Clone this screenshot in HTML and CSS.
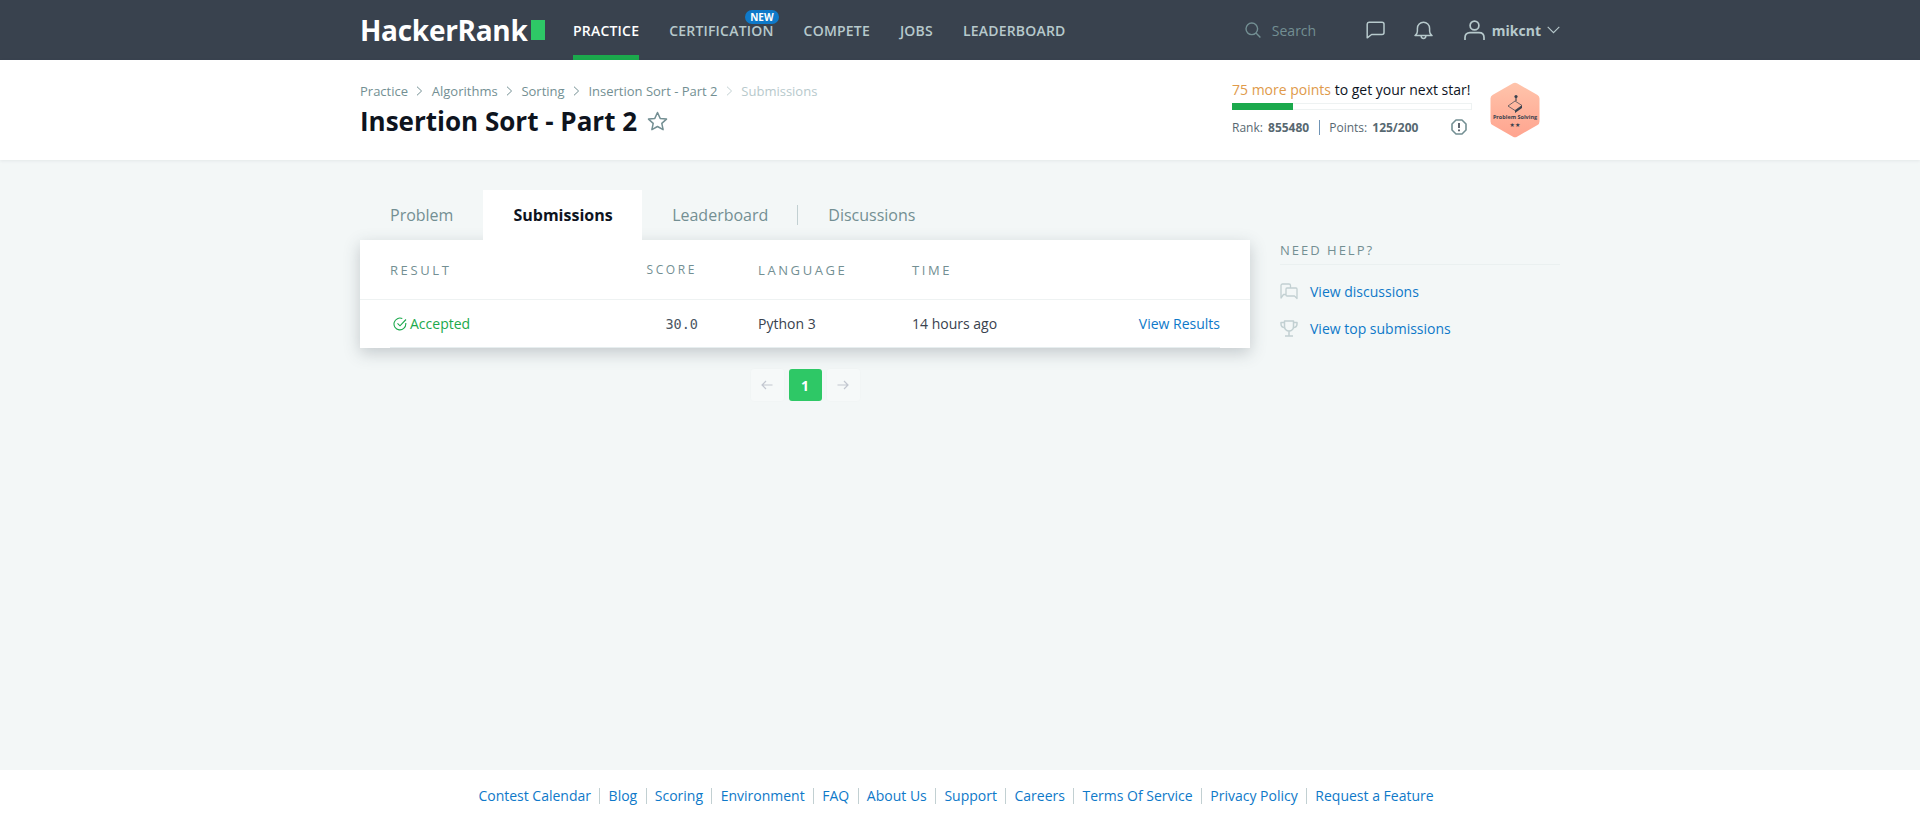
FILE: index.html

```html
<!DOCTYPE html>
<html lang="en">
<head>
  <meta charset="UTF-8" />
  <title>Insertion Sort - Part 2 | HackerRank</title>
  <link rel="stylesheet" href="styles.css">
</head>
<body>

<header class="topbar">
  <div class="wrap topbar-in">
    <a class="logo"><span>HackerRank</span><i class="logo-block"></i></a>
    <nav class="nav">
      <a class="nav-item active">PRACTICE</a>
      <a class="nav-item has-badge">CERTIFICATION<span class="badge-new">NEW</span></a>
      <a class="nav-item">COMPETE</a>
      <a class="nav-item">JOBS</a>
      <a class="nav-item">LEADERBOARD</a>
    </nav>
    <div class="search">
      <svg width="16" height="16" viewBox="0 0 16 16" fill="none" stroke="#738f93" stroke-width="1.4"><circle cx="6.8" cy="6.8" r="5.8"/><path d="M11 11l4.4 4.4"/></svg>
      <span>Search</span>
    </div>
    <svg class="top-icon chat-icon" width="19" height="18" viewBox="0 0 19 18" fill="none" stroke="#b7c9cc" stroke-width="1.5" stroke-linejoin="round"><path d="M3 1.2h13a2 2 0 0 1 2 2v8.3a2 2 0 0 1-2 2H5.6L1.2 16.8V3a2 2 0 0 1 1.8-1.8z"/></svg>
    <svg class="top-icon bell-icon" width="19" height="19" viewBox="0 0 19 19" fill="none" stroke="#b7c9cc" stroke-width="1.5" stroke-linejoin="round"><path d="M1 14.6c1.6-1 2.4-2.4 2.4-4.4V7.4a6.1 6.1 0 0 1 12.2 0v2.8c0 2 .8 3.4 2.4 4.4z"/><path d="M7.2 15c0 3.2 4.6 3.2 4.6 0"/></svg>
    <div class="user">
      <svg width="21" height="20" viewBox="0 0 21 20" fill="none" stroke="#b7c9cc" stroke-width="1.7"><circle cx="10.5" cy="5.5" r="4.4"/><path d="M1 20v-2.5c0-3 2-4.8 5-4.8h9c3 0 5 1.8 5 4.8V20"/></svg>
      <span>mikcnt</span>
      <svg width="13" height="8" viewBox="0 0 13 8" fill="none" stroke="#b7c9cc" stroke-width="1.1"><path d="M.7.8l5.8 5.8L12.3.8"/></svg>
    </div>
  </div>
</header>

<section class="subhead">
  <div class="wrap subhead-in">
    <div class="page-title">
      <div class="crumbs">
        <a>Practice</a><svg class="sep" width="7" height="10" viewBox="0 0 7 10"><path d="M1 .7L5.6 5 1 9.3"/></svg>
        <a>Algorithms</a><svg class="sep" width="7" height="10" viewBox="0 0 7 10"><path d="M1 .7L5.6 5 1 9.3"/></svg>
        <a>Sorting</a><svg class="sep" width="7" height="10" viewBox="0 0 7 10"><path d="M1 .7L5.6 5 1 9.3"/></svg>
        <a>Insertion Sort - Part 2</a><svg class="sep light" width="7" height="10" viewBox="0 0 7 10"><path d="M1 .7L5.6 5 1 9.3"/></svg>
        <a class="current">Submissions</a>
      </div>
      <h1>Insertion Sort - Part 2
        <svg class="star" width="21" height="20" viewBox="0 0 21 20" fill="none" stroke="#738f93" stroke-width="1.5" stroke-linejoin="round"><path d="M10.5 1.5l2.7 5.9 6.3.7-4.7 4.3 1.3 6.3-5.6-3.2-5.6 3.2 1.3-6.3L1.5 8.1l6.3-.7z"/></svg>
      </h1>
    </div>
    <div class="progress">
      <p class="progress-txt"><span class="orange">75 more points</span> to get your next star!</p>
      <div class="bar"><div class="bar-fill"></div></div>
      <div class="stats">
        <span>Rank: <b>855480</b></span><i class="stats-sep"></i><span>Points: <b>125/200</b></span>
        <svg class="info" width="16" height="16" viewBox="0 0 16 16" fill="none"><path d="M5 1h6l4 4v6l-4 4H5l-4-4V5z" stroke="#738f93" stroke-width="1.6" stroke-linejoin="round"/><path d="M8 4v5M8 10.6v1.6" stroke="#39424e" stroke-width="1.6"/></svg>
      </div>
    </div>
    <svg class="hex" width="50" height="56" viewBox="0 0 50 56">
      <defs><linearGradient id="hexfill" x1="0" y1="0" x2="0" y2="1"><stop offset="0" stop-color="#ffc4ab"/><stop offset="1" stop-color="#ffa48f"/></linearGradient></defs>
      <path d="M25 .8a4 4 0 0 1 2 .5L47.500 13a4 4 0 0 1 2 3.500v23a4 4 0 0 1-2 3.500L27 54.700a4 4 0 0 1-4 0L2.500 43a4 4 0 0 1-2-3.500v-23a4 4 0 0 1 2-3.500L23 1.300a4 4 0 0 1 2-.5z" fill="url(#hexfill)"/>
      <path d="M18 24l7-5 7 4.500-7 5z" fill="none" stroke="#39424e" stroke-width=".7"/>
      <path d="M25 28.500l7-5v2.500l-7 5z" fill="#39424e"/>
      <path d="M26 19v-4" stroke="#39424e" stroke-width="1.100"/><circle cx="26" cy="14.500" r="1.600" fill="#39424e"/>
      <text class="hex-name" x="25" y="37" text-anchor="middle">Problem Solving</text>
      <text class="hex-stars" x="25" y="45" text-anchor="middle">★★</text>
    </svg>
  </div>
</section>

<main class="content">
  <div class="wrap columns">
    <div class="main-col">
      <div class="tabs">
        <a class="tab">Problem</a>
        <a class="tab active">Submissions</a>
        <a class="tab">Leaderboard</a>
        <i class="tab-sep"></i>
        <a class="tab">Discussions</a>
      </div>
      <div class="card">
        <div class="grid grid-head">
          <span>RESULT</span>
          <span class="score">SCORE</span>
          <span class="lang">LANGUAGE</span>
          <span>TIME</span>
          <span></span>
        </div>
        <div class="grid grid-row">
          <span class="accepted">
            <svg width="14" height="14" viewBox="0 0 14 14" fill="none" stroke="#1ba94c" stroke-width="1.100"><path d="M12.800 6.100V7A5.900 5.900 0 1 1 9.300 1.600"/><path d="M4.500 6.300L7 8.800l6-6.300"/></svg>
            Accepted
          </span>
          <span class="score mono">30.0</span>
          <span class="lang">Python 3</span>
          <span>14 hours ago</span>
          <a class="link">View Results</a>
        </div>
      </div>
      <div class="pager">
        <a class="page-btn"><svg width="12" height="10" viewBox="0 0 12 10" fill="none" stroke="#c2c7d0" stroke-width="1.200"><path d="M11.500 5H1M5 1L1 5l4 4"/></svg></a>
        <a class="page-btn current">1</a>
        <a class="page-btn"><svg width="12" height="10" viewBox="0 0 12 10" fill="none" stroke="#c2c7d0" stroke-width="1.200"><path d="M.5 5H11M7 1l4 4-4 4"/></svg></a>
      </div>
    </div>
    <aside class="side">
      <h4>NEED HELP?</h4>
      <a class="side-link">
        <svg width="18" height="17" viewBox="0 0 18 17" fill="none" stroke="#c2d0d2" stroke-width="1.300" stroke-linejoin="round"><path d="M6 11.500H3.500L1 15V2.500A1.500 1.500 0 0 1 2.500 1h6.500A1.500 1.500 0 0 1 10.500 2.500V5"/><path d="M7 5h9a1 1 0 0 1 1 1v9.500L14.500 13H7a1 1 0 0 1-1-1V6a1 1 0 0 1 1-1z"/></svg>
        View discussions
      </a>
      <a class="side-link">
        <svg width="18" height="17" viewBox="0 0 18 17" fill="none" stroke="#c2d0d2" stroke-width="1.500" stroke-linejoin="round"><path d="M4.500 1h9v5.500a4.500 4.500 0 0 1-9 0z"/><path d="M4.500 2.500H1V4c0 2 1.500 3.500 4 3.800M13.500 2.500H17V4c0 2-1.500 3.500-4 3.800M9 11v4.500M5 16h8"/></svg>
        View top submissions
      </a>
    </aside>
  </div>
</main>

<footer class="footer">
  <a>Contest Calendar</a><a>Blog</a><a>Scoring</a><a>Environment</a><a>FAQ</a><a>About Us</a><a>Support</a><a>Careers</a><a>Terms Of Service</a><a>Privacy Policy</a><a>Request a Feature</a>
</footer>

</body>
</html>
```

FILE: styles.css

```css
* { box-sizing: border-box; margin: 0; padding: 0; }

html, body { height: 100%; }

body {
  display: flex;
  flex-direction: column;
  font-family: 'Open Sans', sans-serif;
  background-color: #f3f7f7;
  color: #39424e;
  overflow: hidden;
}

.wrap {
  width: 1200px;
  margin: 0 auto;
}

/* top bar */
.topbar {
  height: 60px;
  flex: none;
  background-color: #39424e;
}

.topbar-in {
  display: flex;
  align-items: center;
  height: 100%;
}

.logo {
  display: flex;
  align-items: center;
  width: 213px;
  color: #fff;
  font-size: 28px;
  font-weight: 700;
  letter-spacing: -0.3px;
}

.logo-block {
  width: 14px;
  height: 20px;
  margin-left: 3px;
  background-color: #2ec866;
}

.nav {
  display: flex;
  height: 100%;
  gap: 30px;
}

.nav-item {
  position: relative;
  display: flex;
  align-items: center;
  color: #b7c9cc;
  font-size: 14px;
  font-weight: 600;
  letter-spacing: 0.2px;
}

.nav-item.active {
  color: #fff;
  border-bottom: 5px solid #1ba94c;
  padding-top: 5px;
}

.badge-new {
  position: absolute;
  top: 10px;
  right: -5px;
  height: 14px;
  padding: 0 5px;
  border-radius: 7px;
  background-color: #0e79c9;
  color: #fff;
  font-size: 10px;
  font-weight: 700;
  letter-spacing: 0;
  line-height: 14px;
}

.search {
  display: flex;
  align-items: center;
  gap: 11px;
  margin-left: auto;
  color: #738f93;
  font-size: 14px;
}

.search span { width: 94px; }

.top-icon { flex: none; }
.chat-icon { margin-right: 29px; }
.bell-icon { margin-right: 31px; }

.user {
  display: flex;
  align-items: center;
  gap: 7px;
  color: #b7c9cc;
  font-size: 14px;
  font-weight: 700;
}

.user span { margin-right: -1px; }

/* title band */
.subhead {
  position: relative;
  height: 100px;
  flex: none;
  background-color: #fff;
  box-shadow: 0 1px 3px rgba(57, 66, 78, 0.08);
}

.subhead-in {
  display: flex;
  height: 100%;
}

.page-title { padding-top: 22px; }

.crumbs {
  display: flex;
  align-items: center;
  height: 18px;
  color: #738f93;
  font-size: 13px;
}

.sep {
  margin: 0 8.4px;
  fill: none;
  stroke: #738f93;
}

.sep.light { stroke: #c2d0d2; }
.crumbs .current { color: #b7c9cc; }

h1 {
  display: flex;
  align-items: center;
  gap: 10px;
  margin-top: 2px;
  color: #0e141e;
  font-size: 26px;
  font-weight: 700;
  line-height: 38px;
}

.progress {
  width: 240px;
  margin-left: auto;
  padding-top: 20px;
}

.progress-txt {
  color: #0e141e;
  font-size: 14px;
  line-height: 20px;
}

.orange { color: #e09a4a; }

.bar {
  height: 7px;
  margin-top: 3px;
  border: 1px solid #eef2f2;
}

.bar-fill {
  width: 61px;
  height: 7px;
  margin: -1px 0 0 -1px;
  background-color: #1ba94c;
}

.stats {
  display: flex;
  align-items: center;
  height: 18px;
  margin-top: 8px;
  color: #576871;
  font-size: 12px;
}

.stats b { margin-left: 2px; font-weight: 700; }

.stats-sep {
  width: 1px;
  height: 15px;
  margin: 0 9px 0 10px;
  background-color: #6f93b5;
}

.info { margin-left: auto; margin-right: 5px; }

.hex {
  flex: none;
  margin: 22px 20px 0 18px;
}

.hex-name {
  fill: #39424e;
  font-size: 5.5px;
  font-weight: 700;
}

.hex-stars {
  fill: #39424e;
  font-size: 6px;
  font-family: 'DejaVu Sans', sans-serif;
}

/* main */
.content { flex: 1; }

.columns {
  display: flex;
  gap: 30px;
  padding-top: 30px;
}

.main-col { width: 890px; }

.tabs {
  display: flex;
  align-items: center;
  height: 50px;
}

.tab {
  display: flex;
  align-items: center;
  height: 100%;
  padding: 0 30px;
  color: #738f93;
  font-size: 16px;
}

.tab.active {
  padding: 0 29.5px 0 30px;
  background-color: #fff;
  color: #0e141e;
  font-weight: 700;
}

.tab-sep {
  width: 1px;
  height: 20px;
  margin-left: -1px;
  background-color: #c2d0d2;
}

.card {
  background-color: #fff;
  box-shadow: 0 5px 15px rgba(57, 66, 78, 0.25);
}

.grid {
  display: grid;
  grid-template-columns: 220px 87px 215px 1fr auto;
  align-items: center;
  padding: 0 30px;
}

.grid-head {
  height: 60px;
  border-bottom: 1px solid #eef2f2;
  color: #738f93;
  font-size: 13px;
  letter-spacing: 2.6px;
}

.grid-row {
  height: 48px;
  position: relative;
  color: #39424e;
  font-size: 14px;
  padding-bottom: 1px;
}

.grid-row::after {
  content: '';
  position: absolute;
  left: 30px;
  right: 30px;
  bottom: 0;
  height: 1px;
  background-color: #e7eeef;
}

.score { justify-self: end; }
.grid-head .score { font-size: 12px; }
.lang { padding-left: 61px; }

.mono {
  margin-right: -1px;
  color: #4b5663;
  font-family: 'DejaVu Sans Mono', monospace;
  font-size: 13.5px;
}

.accepted {
  display: flex;
  align-items: center;
  gap: 3px;
  padding-left: 3px;
  color: #1ba94c;
}

.link { color: #0e79c9; }

.pager {
  display: flex;
  justify-content: center;
  gap: 5px;
  margin-top: 21px;
}

.page-btn {
  display: flex;
  align-items: center;
  justify-content: center;
  width: 33px;
  height: 32px;
  border-radius: 3px;
  background-color: #f6f9f9;
  box-shadow: 0 0 2px rgba(57, 66, 78, 0.03);
  color: #fff;
  font-size: 14px;
  font-weight: 700;
}

.page-btn.current { background-color: #2ec866; box-shadow: none; }

.side {
  flex: 1;
  padding-top: 51px;
}

.side h4 {
  height: 24px;
  margin-bottom: 13px;
  border-bottom: 1px solid #eaf0f0;
  color: #738f93;
  font-size: 13px;
  font-weight: 400;
  letter-spacing: 2px;
  line-height: 18px;
}

.side-link {
  display: flex;
  align-items: center;
  gap: 12px;
  height: 26px;
  margin-bottom: 11px;
  color: #0e79c9;
  font-size: 14px;
}

/* footer */
.footer {
  display: flex;
  align-items: center;
  justify-content: center;
  height: 50px;
  flex: none;
  padding: 2px 8px 0 0;
  background-color: #fff;
  font-size: 14px;
}

.footer a {
  padding: 0 8.3px;
  border-left: 1px solid #c2d0d2;
  color: #0e79c9;
  line-height: 16px;
}

.footer a:first-child { border-left: none; }
```
